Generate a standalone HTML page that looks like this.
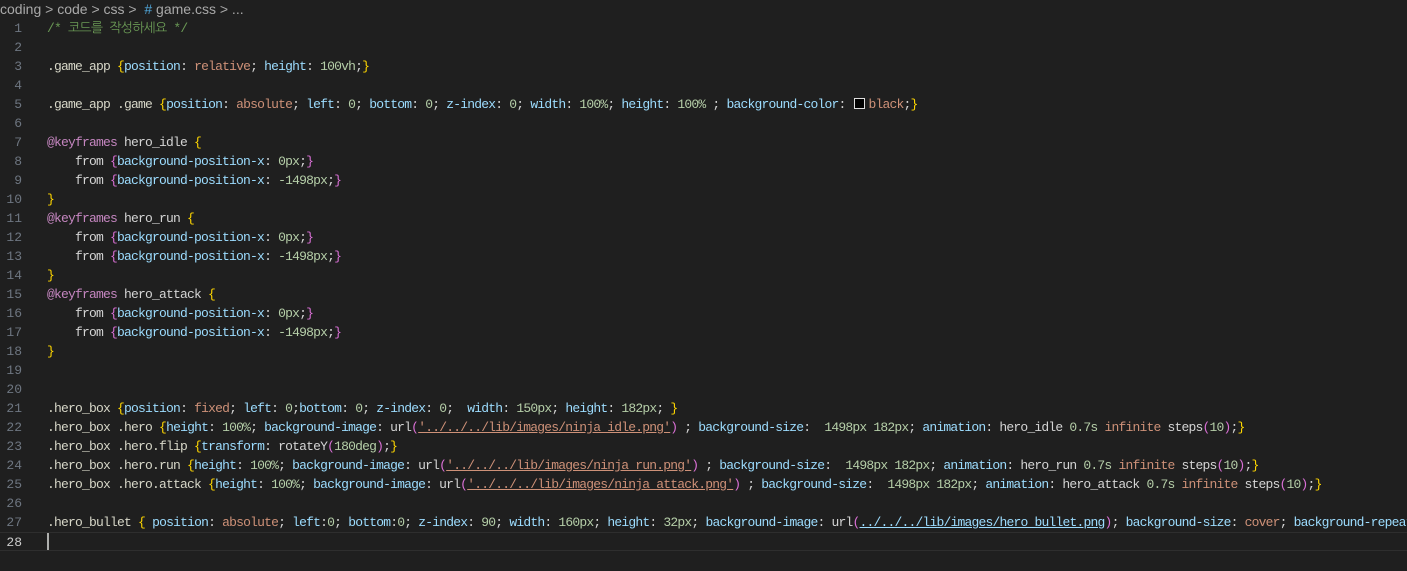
<!DOCTYPE html>
<html><head><meta charset="utf-8"><style>
body{margin:0;background:#1f1f1f;width:1407px;height:571px;overflow:hidden;font-family:"Liberation Mono","NanumGothic",monospace;position:relative}
.bc{position:absolute;top:0;left:0;height:19px;line-height:19px;font-family:"Liberation Sans",sans-serif;font-size:14px;color:#a9a9a9;white-space:pre}
.bc .h{color:#4fa5d8}
.code{position:absolute;top:19px;left:0;width:1407px;overflow:hidden}
.l{height:19px;line-height:19px;white-space:pre;position:relative;font-size:13px;letter-spacing:-0.8px;overflow:hidden}
.n{position:absolute;left:0;width:22px;text-align:right;color:#6e7681;letter-spacing:0}
.t{position:absolute;left:47px;color:#d4d4d4}
.c{color:#6a9955}.s{color:#d7d7c8}.p{color:#9cdcfe}.v{color:#ce9178}.num{color:#b5cea8}.b{color:#ffd700}.pa{color:#da70d6}.k{color:#c586c0}
.u{text-decoration:underline}
.cur{border-top:1px solid #2e2e2e;border-bottom:1px solid #2e2e2e;box-sizing:border-box}
.cur .n{color:#cccccc}
.sw{display:inline-block;width:9px;height:9px;border:1px solid #ddd;background:#000;margin:0 3px 0 2px;vertical-align:-1px}
</style></head><body>
<div class="bc">coding &gt; code &gt; css &gt;  <span class="h">#</span> game.css &gt; ...</div>
<div class="code">
<div class="l"><span class="n">1</span><span class="t c">/* 코드를 작성하세요 */</span></div>
<div class="l"><span class="n">2</span></div>
<div class="l"><span class="n">3</span><span class="t"><span class="s">.game_app</span> <span class="b">{</span><span class="p">position</span>: <span class="v">relative</span>; <span class="p">height</span>: <span class="num">100vh</span>;<span class="b">}</span></span></div>
<div class="l"><span class="n">4</span></div>
<div class="l"><span class="n">5</span><span class="t"><span class="s">.game_app .game</span> <span class="b">{</span><span class="p">position</span>: <span class="v">absolute</span>; <span class="p">left</span>: <span class="num">0</span>; <span class="p">bottom</span>: <span class="num">0</span>; <span class="p">z-index</span>: <span class="num">0</span>; <span class="p">width</span>: <span class="num">100%</span>; <span class="p">height</span>: <span class="num">100%</span> ; <span class="p">background-color</span>: <span class="sw"></span><span class="v">black</span>;<span class="b">}</span></span></div>
<div class="l"><span class="n">6</span></div>
<div class="l"><span class="n">7</span><span class="t"><span class="k">@keyframes</span> hero_idle <span class="b">{</span></span></div>
<div class="l"><span class="n">8</span><span class="t">    from <span class="pa">{</span><span class="p">background-position-x</span>: <span class="num">0px</span>;<span class="pa">}</span></span></div>
<div class="l"><span class="n">9</span><span class="t">    from <span class="pa">{</span><span class="p">background-position-x</span>: <span class="num">-1498px</span>;<span class="pa">}</span></span></div>
<div class="l"><span class="n">10</span><span class="t"><span class="b">}</span></span></div>
<div class="l"><span class="n">11</span><span class="t"><span class="k">@keyframes</span> hero_run <span class="b">{</span></span></div>
<div class="l"><span class="n">12</span><span class="t">    from <span class="pa">{</span><span class="p">background-position-x</span>: <span class="num">0px</span>;<span class="pa">}</span></span></div>
<div class="l"><span class="n">13</span><span class="t">    from <span class="pa">{</span><span class="p">background-position-x</span>: <span class="num">-1498px</span>;<span class="pa">}</span></span></div>
<div class="l"><span class="n">14</span><span class="t"><span class="b">}</span></span></div>
<div class="l"><span class="n">15</span><span class="t"><span class="k">@keyframes</span> hero_attack <span class="b">{</span></span></div>
<div class="l"><span class="n">16</span><span class="t">    from <span class="pa">{</span><span class="p">background-position-x</span>: <span class="num">0px</span>;<span class="pa">}</span></span></div>
<div class="l"><span class="n">17</span><span class="t">    from <span class="pa">{</span><span class="p">background-position-x</span>: <span class="num">-1498px</span>;<span class="pa">}</span></span></div>
<div class="l"><span class="n">18</span><span class="t"><span class="b">}</span></span></div>
<div class="l"><span class="n">19</span></div>
<div class="l"><span class="n">20</span></div>
<div class="l"><span class="n">21</span><span class="t"><span class="s">.hero_box</span> <span class="b">{</span><span class="p">position</span>: <span class="v">fixed</span>; <span class="p">left</span>: <span class="num">0</span>;<span class="p">bottom</span>: <span class="num">0</span>; <span class="p">z-index</span>: <span class="num">0</span>;  <span class="p">width</span>: <span class="num">150px</span>; <span class="p">height</span>: <span class="num">182px</span>; <span class="b">}</span></span></div>
<div class="l"><span class="n">22</span><span class="t"><span class="s">.hero_box .hero</span> <span class="b">{</span><span class="p">height</span>: <span class="num">100%</span>; <span class="p">background-image</span>: url<span class="pa">(</span><span class="v u">'../../../lib/images/ninja_idle.png'</span><span class="pa">)</span> ; <span class="p">background-size</span>:  <span class="num">1498px</span> <span class="num">182px</span>; <span class="p">animation</span>: hero_idle <span class="num">0.7s</span> <span class="v">infinite</span> steps<span class="pa">(</span><span class="num">10</span><span class="pa">)</span>;<span class="b">}</span></span></div>
<div class="l"><span class="n">23</span><span class="t"><span class="s">.hero_box .hero.flip</span> <span class="b">{</span><span class="p">transform</span>: rotateY<span class="pa">(</span><span class="num">180deg</span><span class="pa">)</span>;<span class="b">}</span></span></div>
<div class="l"><span class="n">24</span><span class="t"><span class="s">.hero_box .hero.run</span> <span class="b">{</span><span class="p">height</span>: <span class="num">100%</span>; <span class="p">background-image</span>: url<span class="pa">(</span><span class="v u">'../../../lib/images/ninja_run.png'</span><span class="pa">)</span> ; <span class="p">background-size</span>:  <span class="num">1498px</span> <span class="num">182px</span>; <span class="p">animation</span>: hero_run <span class="num">0.7s</span> <span class="v">infinite</span> steps<span class="pa">(</span><span class="num">10</span><span class="pa">)</span>;<span class="b">}</span></span></div>
<div class="l"><span class="n">25</span><span class="t"><span class="s">.hero_box .hero.attack</span> <span class="b">{</span><span class="p">height</span>: <span class="num">100%</span>; <span class="p">background-image</span>: url<span class="pa">(</span><span class="v u">'../../../lib/images/ninja_attack.png'</span><span class="pa">)</span> ; <span class="p">background-size</span>:  <span class="num">1498px</span> <span class="num">182px</span>; <span class="p">animation</span>: hero_attack <span class="num">0.7s</span> <span class="v">infinite</span> steps<span class="pa">(</span><span class="num">10</span><span class="pa">)</span>;<span class="b">}</span></span></div>
<div class="l"><span class="n">26</span></div>
<div class="l"><span class="n">27</span><span class="t"><span class="s">.hero_bullet</span> <span class="b">{</span> <span class="p">position</span>: <span class="v">absolute</span>; <span class="p">left</span>:<span class="num">0</span>; <span class="p">bottom</span>:<span class="num">0</span>; <span class="p">z-index</span>: <span class="num">90</span>; <span class="p">width</span>: <span class="num">160px</span>; <span class="p">height</span>: <span class="num">32px</span>; <span class="p">background-image</span>: url<span class="pa">(</span><span class="u" style="color:#9cdcfe">../../../lib/images/hero_bullet.png</span><span class="pa">)</span>; <span class="p">background-size</span>: <span class="v">cover</span>; <span class="p">background-repeat</span>: <span class="v">no-re</span></span></div>
<div class="l cur"><span class="n">28</span><span class="t" style="border-left:2px solid #aeafad;height:17px;top:0"></span></div>
</div>
</body></html>
